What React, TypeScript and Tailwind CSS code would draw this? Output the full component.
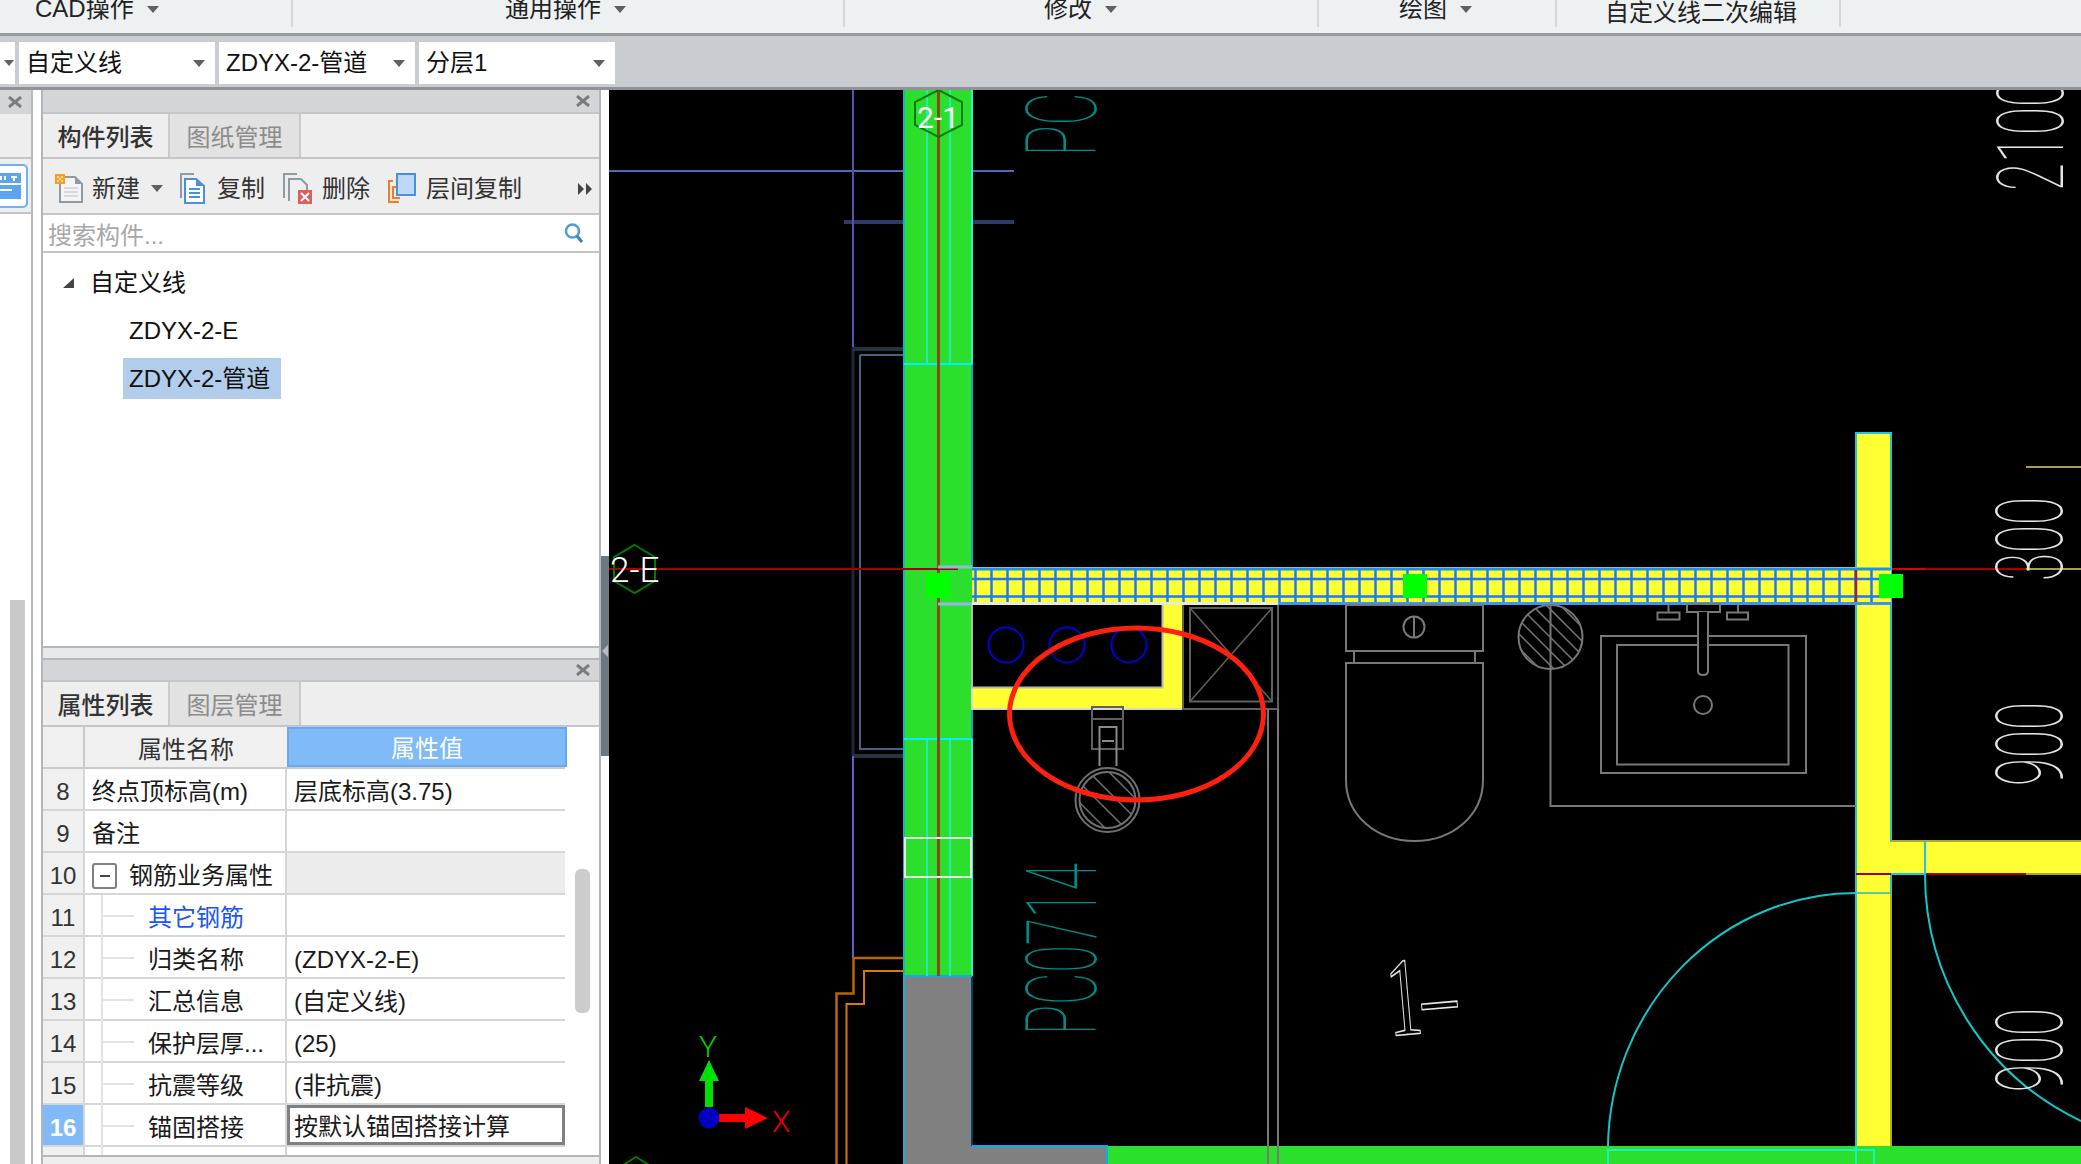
import type { ReactNode } from "react";

const cadGray = "#787878";

const ribbonSections = [
  { label: "CAD操作", width: "w-[293px]", pad: "pl-[35px]", caret: true },
  { label: "通用操作", width: "w-[552px]", pad: "pl-[212px]", caret: true },
  { label: "修改", width: "w-[474px]", pad: "pl-[199px]", caret: true },
  { label: "绘图", width: "w-[238px]", pad: "pl-[80px]", caret: true },
  { label: "自定义线二次编辑", width: "w-[284px]", pad: "pl-[48px]", caret: false },
];

const rows = [
  { no: "8", name: "终点顶标高(m)", value: "层底标高(3.75)" },
  { no: "9", name: "备注", value: "" },
  { no: "10", name: "钢筋业务属性", value: "", group: true },
  { no: "11", name: "其它钢筋", value: "", child: true, link: true },
  { no: "12", name: "归类名称", value: "(ZDYX-2-E)", child: true },
  { no: "13", name: "汇总信息", value: "(自定义线)", child: true },
  { no: "14", name: "保护层厚...", value: "(25)", child: true },
  { no: "15", name: "抗震等级", value: "(非抗震)", child: true },
  { no: "16", name: "锚固搭接", value: "按默认锚固搭接计算", child: true, active: true },
];

const Caret = ({ className = "" }: { className?: string }) => (
  <span
    className={`inline-block h-0 w-0 border-x-[6px] border-t-[7px] border-x-transparent border-t-[#606060] ${className}`}
  />
);

const CloseX = () => (
  <svg width="14" height="12" viewBox="0 0 14 12" className="shrink-0">
    <path d="M1 1 L13 11 M13 1 L1 11" stroke="#7c7c7c" strokeWidth="3" />
  </svg>
);

const NewIcon = () => (
  <svg width="30" height="30" viewBox="0 0 30 30">
    <path d="M5 3 H20 L27 10 V28 H5 Z" fill="#f4f4f4" stroke="#8f9aa2" strokeWidth="2" />
    <path d="M20 3 V10 H27 Z" fill="#8f9aa2" />
    <path d="M9 14 H23 M9 18 H23 M9 22 H23" stroke="#d9d9e2" strokeWidth="2" />
    <rect x="0" y="0" width="10" height="10" fill="#ff9a1a" />
    <path d="M2 2 h2 v2 h-2 Z M6 2 h2 v2 h-2 Z M4 4 h2 v2 h-2 Z M2 6 h2 v2 h-2 Z M6 6 h2 v2 h-2 Z" fill="#ffe0a0" />
  </svg>
);

const CopyIcon = () => (
  <svg width="26" height="32" viewBox="0 0 26 32">
    <path d="M1 25 V1 H14" fill="none" stroke="#8f9aa2" strokeWidth="2" />
    <path d="M5 6 H16 L24 13 V30 H5 Z" fill="#fff" stroke="#4a8fdc" strokeWidth="2" />
    <path d="M16 6 V13 H24" fill="#4a8fdc" />
    <path d="M9 16 H20 M9 20 H20 M9 24 H20" stroke="#4a8fdc" strokeWidth="2" />
  </svg>
);

const DeleteIcon = () => (
  <svg width="30" height="32" viewBox="0 0 30 32">
    <path d="M1 25 V1 H14" fill="none" stroke="#8f9aa2" strokeWidth="2" />
    <path d="M6 28 V6 H18 L24 12 V20" fill="none" stroke="#8f9aa2" strokeWidth="2" />
    <rect x="15" y="17" width="14" height="14" fill="#d9605c" />
    <path d="M18 20 L26 28 M26 20 L18 28" stroke="#fff" strokeWidth="2" />
  </svg>
);

const LayerCopyIcon = () => (
  <svg width="30" height="32" viewBox="0 0 30 32">
    <path d="M6 8 H2 V29 H12" fill="none" stroke="#f57c20" strokeWidth="2" />
    <path d="M9 14 H6 V25 H13" fill="none" stroke="#f57c20" strokeWidth="2" />
    <rect x="10" y="1" width="18" height="21" fill="#bcd8fb" stroke="#4a8fdc" strokeWidth="2" />
  </svg>
);

const PanelHeader = ({ height }: { height: string }) => (
  <div className={`flex shrink-0 items-center justify-end border-b-2 border-[#c4c6ca] bg-[#d3d5d9] pr-[9px] ${height}`}>
    <CloseX />
  </div>
);

const PanelTabs = ({ active, other }: { active: string; other: string }) => (
  <div className="flex h-[45px] shrink-0 border-b-2 border-[#c3c5c8] bg-[#eeeeee]">
    <div className="flex w-[127px] items-center justify-center border-r-2 border-[#c8cacc] pt-[4px] font-medium text-[#333333]">
      {active}
    </div>
    <div className="flex w-[131px] items-center justify-center border-r-2 border-[#c8cacc] bg-[#e2e2e2] pt-[4px] text-[#8c8c8c]">
      {other}
    </div>
  </div>
);

const ToolButton = ({ icon, label, className = "" }: { icon: ReactNode; label: string; className?: string }) => (
  <div className={`flex items-center ${className}`}>
    {icon}
    <span className="ml-[11px] text-[#333333]">{label}</span>
  </div>
);

const PropRow = ({ row }: { row: (typeof rows)[number] }) => (
  <div className="flex h-[42px] shrink-0 border-b-2 border-[#d6d6d6]">
    <div
      className={`flex w-[42px] shrink-0 items-center justify-center border-r-2 border-[#d6d6d6] pt-[5px] ${
        row.active ? "bg-[#80baf8] font-bold text-white" : "bg-[#f0f0f0] text-[#333333]"
      }`}
    >
      {row.no}
    </div>
    <div className="relative flex w-[202px] shrink-0 items-center border-r-2 border-[#d6d6d6] bg-white pl-[7px] pt-[5px]">
      {row.child && (
        <>
          <span className="absolute bottom-[-2px] left-[16px] top-0 w-[2px] bg-[#e4e4e4]" />
          <span className="absolute left-[18px] top-[20px] h-[2px] w-[31px] bg-[#e4e4e4]" />
        </>
      )}
      {row.group && (
        <span className="mr-[12px] flex h-[26px] w-[25px] items-center justify-center rounded-[3px] border-2 border-[#808080] text-[16px] leading-none">
          <span className="h-[2px] w-[10px] bg-[#444444]" />
        </span>
      )}
      <span
        className={`whitespace-nowrap ${row.child ? "ml-[56px]" : ""} ${row.link ? "text-[#1a56f0]" : "text-[#1a1a1a]"}`}
      >
        {row.name}
      </span>
    </div>
    <div
      className={`flex w-[278px] shrink-0 items-center whitespace-nowrap pl-[7px] pt-[5px] text-[#1a1a1a] ${
        row.active ? "border-[3px] border-[#808080] bg-white !pl-[4px] !pt-[3px]" : row.group ? "bg-[#ececec]" : "bg-white"
      }`}
    >
      {row.value}
    </div>
  </div>
);

const CadText = ({
  x,
  y,
  size,
  sx,
  fill,
  children,
}: {
  x: number;
  y: number;
  size: number;
  sx: number;
  fill: string;
  children: string;
}) => (
  <text
    transform={`translate(${x} ${y}) rotate(-90) scale(${sx} 1)`}
    fontSize={size}
    fill={fill}
    className="font-['Roboto',sans-serif] font-thin"
  >
    {children}
  </text>
);

const Canvas = () => {
  const gridLines = Array.from({ length: 57 }, (_, i) => 975.5 + i * 16);
  const hatch = [-28, -21, -14, -7, 0, 7, 14, 21, 28];

  return (
    <svg viewBox="609 90 1472 1074" className="block h-[1074px] w-[1472px] bg-black">
      <defs>
        <clipPath id="hatchA">
          <circle cx="1550.5" cy="637" r="32" />
        </clipPath>
        <clipPath id="hatchB">
          <circle cx="1107.5" cy="800" r="28" />
        </clipPath>
      </defs>

      {/* lines left of the column */}
      <path d="M609 171 H1014" stroke="#5468b8" strokeWidth="2" />
      <path d="M844 222 H1014" stroke="#2e3a68" strokeWidth="4" />
      <path d="M853 90 V347" stroke="#5454b0" strokeWidth="2" />
      <path d="M853 347 V756" stroke="#1d2a35" strokeWidth="3" />
      <path d="M853 349 H904 M853 756 H904" stroke="#23333f" strokeWidth="4" />
      <path d="M860 355 V749 H904 M860 355 H904" fill="none" stroke="#466480" strokeWidth="2" />
      <path d="M853 756 V958" stroke="#6a5acd" strokeWidth="2" />
      <path d="M904 958 H853.5 V993.5 H836.5 V1164" fill="none" stroke="#b8640a" strokeWidth="2.5" />
      <path d="M904 971 H864 V1004 H846.5 V1164" fill="none" stroke="#d87a10" strokeWidth="2" />

      {/* green column and grey base */}
      <rect x="904" y="90" width="68" height="886" fill="#2ddf2d" />
      <rect x="904" y="976" width="68" height="188" fill="#808080" />
      <rect x="972" y="1146" width="135" height="18" fill="#808080" />
      <rect x="1107" y="1146" width="974" height="18" fill="#2ddf2d" />
      <path d="M904 90 V1164" stroke="#14b0d0" strokeWidth="2" />
      <path d="M972 90 V364 M972 739 V976" stroke="#2af0d0" strokeWidth="2" />
      <path d="M972 364 V567" stroke="#14a8c8" strokeWidth="2" />
      <path d="M972 709 V739" stroke="#14a8c8" strokeWidth="2" />
      <path d="M972 976 V1146" stroke="#0a3d58" strokeWidth="2" />
      <path d="M904 976 H972" stroke="#00b0f0" strokeWidth="2" />
      <path d="M972 1146 H1107 V1164" fill="none" stroke="#00b0f0" strokeWidth="2" />
      <path d="M927 90 V364 M950 90 V364 M927 739 V976 M950 739 V976" stroke="#28e8b8" strokeWidth="2" />
      <path d="M904 364 H972 M904 739 H972" stroke="#00f0ff" strokeWidth="2" />
      <path d="M938.5 90 V976" stroke="#8a4a18" strokeWidth="3" />
      <rect x="905" y="838" width="66" height="39" fill="none" stroke="#e4e8e4" strokeWidth="2" />

      {/* axis red line */}
      <path d="M609 569 H958" stroke="#a80000" strokeWidth="2" />
      <path d="M1891 569 H1925" stroke="#e00000" strokeWidth="2" />
      <path d="M1925 569 H2026" stroke="#a80000" strokeWidth="2" />
      <path d="M2026 569 H2081" stroke="#a8a050" strokeWidth="2" />
      <path d="M2026 467 H2081" stroke="#a8a050" strokeWidth="2" />

      {/* yellow walls */}
      <rect x="1856" y="433" width="35" height="713" fill="#ffff33" />
      <rect x="1891" y="841" width="190" height="33" fill="#ffff33" />
      <path d="M1856 1146 V433 H1891 V841 H1925 M1891 874 V893" fill="none" stroke="#18c8e0" strokeWidth="2" />
      <path d="M1891 841 H2081" stroke="#a8a830" strokeWidth="2" />
      <path d="M1856 874 H1891" stroke="#a00000" strokeWidth="2" />
      <path d="M1891 874 H1925" stroke="#18c8e0" strokeWidth="2" />
      <path d="M1925 874 H2026" stroke="#a80000" strokeWidth="2" />
      <path d="M2026 874 H2081" stroke="#a8a830" strokeWidth="2" />
      <path d="M1925 841 V874" stroke="#18c8e0" strokeWidth="2" />
      <path d="M1856 893 H1891" stroke="#60c8a0" strokeWidth="2" />
      <path d="M1891 893 V1146" stroke="#b0b020" strokeWidth="2" />
      <path d="M1608 1146 A248 257 0 0 1 1856 893" fill="none" stroke="#10c8c8" strokeWidth="2" />
      <path d="M1925 874 A273 273 0 0 0 2081 1121" fill="none" stroke="#10c8c8" strokeWidth="2" />
      <path d="M1608 1164 V1150 H1874 V1164" fill="none" stroke="#20f0c0" strokeWidth="2" />
      <path d="M1856 1146 V1164" stroke="#20f0c0" strokeWidth="2" />

      {/* L shaped yellow block */}
      <path d="M972 604 H1183 V709 H972 Z" fill="#ffff33" stroke="#d8d8c8" strokeWidth="2" />
      <rect x="972" y="604" width="190.5" height="83.5" fill="#000" stroke="#b8b8b8" strokeWidth="2" />
      <circle cx="1006" cy="645" r="17.5" fill="none" stroke="#0000d8" strokeWidth="2" />
      <circle cx="1067" cy="645" r="17.5" fill="none" stroke="#0000d8" strokeWidth="2" />
      <circle cx="1129" cy="645" r="17.5" fill="none" stroke="#0000d8" strokeWidth="2" />

      {/* duct box */}
      <rect x="1183" y="604" width="95" height="105" fill="#000" stroke="#606060" strokeWidth="2" />
      <rect x="1190" y="608" width="82" height="93.5" fill="none" stroke="#606060" strokeWidth="2" />
      <path d="M1190 608 L1272 701.5 M1272 608 L1190 701.5" stroke="#606060" strokeWidth="1.5" />
      <path d="M1268 709 V1164 M1278 709 V1164" stroke={cadGray} strokeWidth="2" />

      {/* beam being edited */}
      <rect x="972" y="567" width="919" height="38" fill="#ffff33" />
      <path d="M972 569 H1891" stroke="#1e90f0" strokeWidth="3" />
      <path d="M972 603.5 H1278" stroke="#e8e8e8" strokeWidth="2.5" />
      <path d="M1278 603.5 H1891" stroke="#3c96f0" strokeWidth="3" />
      <path d="M972 579 H1891 M972 596.5 H1891" stroke="#1e78ff" strokeWidth="2.5" />
      {gridLines.map((x) => (
        <path key={x} d={`M${x} 570 V602`} stroke="#1e78ff" strokeWidth="2.5" />
      ))}
      <path d="M1856 570 V602" stroke="#a02040" strokeWidth="2.5" />
      <path d="M938 567 H972 M938 604 H972" stroke="#90b8e8" strokeWidth="3" />

      {/* tap */}
      <rect x="1092" y="707" width="31" height="42" fill="none" stroke="#606060" strokeWidth="2" />
      <path d="M1092 719 H1123" stroke="#606060" strokeWidth="2" />
      <path d="M1099.5 766 V727 H1116.5 V766 M1102 741 H1114" fill="none" stroke="#8a8a8a" strokeWidth="2" />
      <circle cx="1107.5" cy="800" r="32" fill="none" stroke="#707070" strokeWidth="2" />
      <circle cx="1107.5" cy="800" r="28" fill="none" stroke="#707070" strokeWidth="2" />
      <g clipPath="url(#hatchB)" stroke="#707070" strokeWidth="1.5">
        {[-15, -5, 5, 15].map((d) => (
          <path key={d} d={`M${1067 + d} ${760 - d} L${1147 + d} ${840 - d}`} />
        ))}
      </g>

      {/* toilet */}
      <g fill="none" stroke={cadGray} strokeWidth="2">
        <rect x="1346" y="605" width="137" height="46" />
        <path d="M1354 651 V663 M1475 651 V663" />
        <path d="M1346 663 H1483 V780 C1483 816 1452 841 1414.5 841 C1377 841 1346 816 1346 780 Z" />
        <circle cx="1414" cy="627" r="10.5" />
        <path d="M1414 617 V637" />
      </g>

      {/* floor drain and counter */}
      <g fill="none" stroke={cadGray} strokeWidth="2">
        <circle cx="1550.5" cy="637" r="32" />
        <g clipPath="url(#hatchA)" strokeWidth="1.5">
          {hatch.map((d) => (
            <path key={d} d={`M${1510 + d} ${597 - d} L${1590 + d} ${677 - d}`} />
          ))}
        </g>
        <path d="M1550.5 605 V669" />
        <path d="M1550.5 669 V806 H1856" />
        <rect x="1601" y="636" width="205" height="137" />
        <rect x="1617" y="645" width="171.5" height="119.5" />
        <circle cx="1703" cy="705" r="9" />
        <rect x="1687" y="604" width="33" height="8" />
        <path d="M1698 612 V671 Q1698 675 1703 675 Q1708 675 1708 671 V612" fill="#000" />
        <rect x="1657.5" y="612.5" width="22" height="7" />
        <path d="M1668.5 605 V612.5 M1738 605 V612.5" />
        <rect x="1727" y="612.5" width="21" height="7" />
      </g>

      {/* drag handles */}
      <rect x="926" y="573" width="24" height="25" fill="#00ff00" />
      <rect x="1403" y="574" width="24" height="24" fill="#00ff00" />
      <rect x="1879" y="574" width="24" height="24" fill="#00ff00" />

      {/* red markup ellipse */}
      <ellipse cx="1136.5" cy="714" rx="127" ry="86" fill="none" stroke="#ff2010" strokeWidth="5" />

      {/* axis bubbles */}
      <path d="M634.5 545 L655 557 V581 L634.5 593 L614 581 V557 Z" fill="none" stroke="#007a00" strokeWidth="2" />
      <text x="610" y="582" fontSize="35" fill="#fff" className="font-['Roboto',sans-serif] font-light">
        2-E
      </text>
      <path d="M938.5 90 L962 102 V125 L938.5 137 L915 125 V102 Z" fill="none" stroke="#007a00" strokeWidth="2" />
      <text x="917" y="128" fontSize="30" fill="#fff" className="font-['Roboto',sans-serif] font-normal">
        2-1
      </text>
      <path d="M612 1172 L636 1157 L660 1172" fill="none" stroke="#007a00" strokeWidth="2" />

      {/* cad labels */}
      <CadText x={1096} y={156} size={98} sx={0.52} fill="#008a8a">
        PC
      </CadText>
      <CadText x={1096} y={1035} size={98} sx={0.51} fill="#008a8a">
        PC0714
      </CadText>
      <CadText x={2063} y={191} size={93} sx={0.55} fill="#e4e4e4">
        2100
      </CadText>
      <CadText x={2062} y={581} size={93} sx={0.55} fill="#e4e4e4">
        300
      </CadText>
      <CadText x={2062} y={786} size={93} sx={0.55} fill="#e4e4e4">
        900
      </CadText>
      <CadText x={2062} y={1092} size={93} sx={0.55} fill="#e4e4e4">
        900
      </CadText>
      <text
        transform="translate(1390 1036) rotate(-5) scale(0.62 1)"
        fontSize="112"
        fill="none"
        stroke="#e8e8e8"
        strokeWidth="1.5"
        className="font-['Liberation_Serif',serif]"
      >
        1–
      </text>

      {/* XY gizmo */}
      <text x="699" y="1057" fontSize="30" fill="#00d000" className="font-['Roboto',sans-serif] font-light">
        Y
      </text>
      <path d="M709 1107 V1075" stroke="#00e000" strokeWidth="8" />
      <path d="M709 1060 L719 1081 H699 Z" fill="#00e000" />
      <path d="M715 1118 H750" stroke="#ff0000" strokeWidth="8" />
      <path d="M768 1118 L745 1107 V1129 Z" fill="#ff0000" />
      <circle cx="709" cy="1118" r="10.5" fill="#0000c0" />
      <text x="772" y="1132" fontSize="30" fill="#e80000" className="font-['Roboto',sans-serif] font-light">
        X
      </text>
    </svg>
  );
};

export default function App() {
  return (
    <div className="flex h-[1164px] w-[2081px] flex-col overflow-hidden bg-[#c9ccd0] font-['Liberation_Sans','Noto_Sans_CJK_SC',sans-serif] text-[24px] leading-[24px]">
      {/* ribbon group labels */}
      <div className="flex h-[36px] shrink-0 border-b-[3px] border-[#9a9da0] bg-[#eef1f2]">
        {ribbonSections.map((s, i) => (
          <div key={s.label} className={`h-[27px] shrink-0 border-r-2 border-[#d4d7d8] ${s.width} ${s.pad}`}>
            <div className={`flex items-center whitespace-nowrap text-[#222222] ${i === 4 ? "mt-px" : "-mt-[3px]"}`}>
              {s.label}
              {s.caret && <Caret className="ml-[13px]" />}
            </div>
          </div>
        ))}
      </div>

      {/* combo row */}
      <div className="flex h-[54px] shrink-0 items-start border-b-[3px] border-[#8f9296] pt-[6px]">
        <div className="flex h-[42px] w-[15px] shrink-0 items-center justify-end bg-white pr-[1px]">
          <span className="h-0 w-0 border-x-[5px] border-t-[6px] border-x-transparent border-t-[#606060]" />
        </div>
        {["自定义线", "ZDYX-2-管道", "分层1"].map((label) => (
          <div
            key={label}
            className="ml-[4px] flex h-[42px] w-[196px] shrink-0 items-center justify-between bg-white pl-[7px] pr-[10px] text-[#111111]"
          >
            {label}
            <span className="h-0 w-0 border-x-[6px] border-t-[7px] border-x-transparent border-t-[#606060]" />
          </div>
        ))}
      </div>

      <div className="flex min-h-0 flex-1">
        {/* collapsed side panel */}
        <div className="flex w-[33px] shrink-0 flex-col border-r-2 border-[#b8babd] bg-white">
          <div className="flex h-[24px] shrink-0 items-center justify-end bg-[#d3d5d9] pr-[9px]">
            <CloseX />
          </div>
          <div className="h-[45px] shrink-0 border-b-2 border-[#c3c5c8] bg-[#eeeeee]" />
          <div className="flex h-[55px] shrink-0 items-center border-b-2 border-[#c3c5c8] bg-[#eeeeee]">
            <svg width="29" height="44" viewBox="0 0 29 44">
              <rect x="-6" y="1" width="33" height="42" rx="4" fill="#fff" stroke="#70b0f4" strokeWidth="2" />
              <rect x="-4" y="9" width="25" height="26" fill="#5ca4f0" />
              <path d="M-2 20 H21 M-2 26 H12" stroke="#fff" strokeWidth="2" />
              <path d="M1 12 V16 M5 12 V16 M11 13 H17 M14 13 V17" stroke="#fff" strokeWidth="2" />
            </svg>
          </div>
          <div className="flex min-h-0 flex-1 pl-[10px] pt-[386px]">
            <div className="h-full w-[15px] bg-[#c8c8c8]" />
          </div>
        </div>
        <div className="w-[8px] shrink-0 bg-white" />

        {/* panels */}
        <div className="flex w-[560px] shrink-0 flex-col border-x-2 border-[#b4b6b9] bg-white">
          <div className="flex h-[558px] shrink-0 flex-col border-b-2 border-[#b4b6b9]">
            <PanelHeader height="h-[24px]" />
            <PanelTabs active="构件列表" other="图纸管理" />
            <div className="flex h-[56px] shrink-0 items-center border-b-2 border-[#c3c5c8] bg-[#eeeeee] pl-[12px] pr-[6px] pt-[5px]">
              <ToolButton icon={<NewIcon />} label="新建" className="ml-0 [&>span]:ml-[7px]" />
              <Caret className="ml-[11px]" />
              <ToolButton icon={<CopyIcon />} label="复制" className="ml-[17px]" />
              <ToolButton icon={<DeleteIcon />} label="删除" className="ml-[18px] [&>span]:ml-[9px]" />
              <ToolButton icon={<LayerCopyIcon />} label="层间复制" className="ml-[17px] [&>span]:ml-[9px]" />
              <svg width="16" height="14" viewBox="0 0 16 14" className="ml-auto">
                <path d="M1 1 L7 7 L1 13 Z M9 1 L15 7 L9 13 Z" fill="#444444" />
              </svg>
            </div>
            <div className="flex h-[38px] shrink-0 items-center justify-between border-b-2 border-[#c3c5c8] bg-white pl-[5px] pr-[15px] pt-[5px] text-[#a8a8a8]">
              <span>搜索构件...</span>
              <svg width="20" height="22" viewBox="0 0 20 22" className="-mt-[5px]">
                <circle cx="8.5" cy="9" r="6.5" fill="none" stroke="#4f9fd0" strokeWidth="2.5" />
                <path d="M13 14 L18 20" stroke="#3a80b8" strokeWidth="3" />
              </svg>
            </div>
            <div className="flex flex-col items-start pt-[6px] text-[#111111]">
              <div className="flex h-[48px] items-center pl-[20px]">
                <span className="h-0 w-0 border-b-[10px] border-l-[11px] border-b-[#444444] border-l-transparent" />
                <span className="ml-[16px]">自定义线</span>
              </div>
              <div className="flex h-[48px] items-center pl-[86px]">ZDYX-2-E</div>
              <div className="ml-[80px] mt-[3px] flex h-[41px] w-[158px] items-center bg-[#b2cdec] pl-[6px]">
                ZDYX-2-管道
              </div>
            </div>
          </div>

          <div className="h-[10px] shrink-0 bg-[#e8e9ea]" />

          <div className="flex min-h-0 flex-1 flex-col border-t-2 border-[#b4b6b9]">
            <PanelHeader height="h-[22px]" />
            <PanelTabs active="属性列表" other="图层管理" />
            <div className="flex min-h-0 flex-1">
              <div className="flex w-[522px] shrink-0 flex-col">
                <div className="flex h-[42px] shrink-0 border-b-2 border-[#c8cacc]">
                  <div className="w-[42px] shrink-0 border-r-2 border-[#c8cacc] bg-[#f0f0f0]" />
                  <div className="flex w-[202px] shrink-0 items-center justify-center bg-[#f0f0f0] pt-[5px] text-[#333333]">
                    属性名称
                  </div>
                  <div className="flex w-[280px] shrink-0 items-center justify-center border-2 border-[#68aaf0] bg-[#80baf8] pt-[3px] text-white">
                    属性值
                  </div>
                </div>
                {rows.map((row) => (
                  <PropRow key={row.no} row={row} />
                ))}
                <div className="flex h-[10px] shrink-0 border-b-2 border-[#d6d6d6]">
                  <div className="w-[42px] shrink-0 border-r-2 border-[#d6d6d6] bg-[#f0f0f0]" />
                  <div className="relative w-[202px] shrink-0 border-r-2 border-[#d6d6d6]">
                    <span className="absolute inset-y-0 left-[16px] w-[2px] bg-[#e4e4e4]" />
                  </div>
                </div>
              </div>
              <div className="flex flex-1 justify-center pt-[142px]">
                <div className="h-[144px] w-[15px] rounded-[6px] bg-[#cccccc]" />
              </div>
            </div>
            <div className="h-[9px] shrink-0 border-t-2 border-[#b4b6b9] bg-[#eeeeee]" />
          </div>
        </div>

        {/* splitter */}
        <div className="flex w-[8px] shrink-0 flex-col bg-white pt-[466px]">
          <div className="relative h-[200px] bg-[#6d7780]">
            <span className="absolute left-[1px] top-[89px] h-0 w-0 border-y-[6px] border-r-[6px] border-y-transparent border-r-[#b8bcc0]" />
          </div>
        </div>

        <Canvas />
      </div>
    </div>
  );
}
